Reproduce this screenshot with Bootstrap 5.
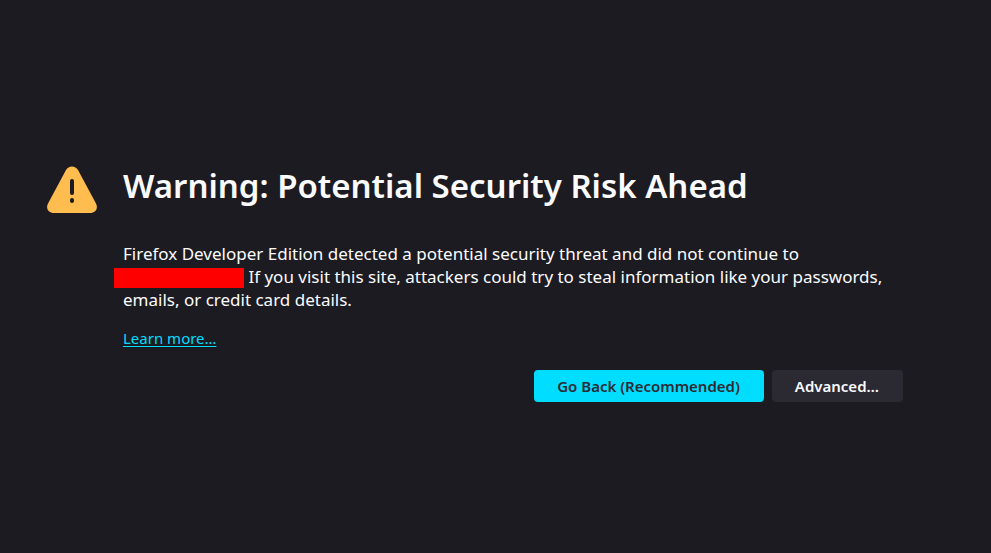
<!DOCTYPE html>
<html lang="en">
<head>
<meta charset="utf-8">
<meta name="viewport" content="width=device-width, initial-scale=1">
<title>Warning: Potential Security Risk Ahead</title>
<link href="https://cdn.jsdelivr.net/npm/bootstrap@5.3.0/dist/css/bootstrap.min.css" rel="stylesheet">
<style>
body { background: #1c1b22; color: #fbfbfe; font-family: "Noto Sans", sans-serif; font-size: 15px; padding: 7px 88px 0 47px; }
.warn-icon { width: 50px; height: 48px; margin-top: 8px; margin-right: 26px; }
h1 { font-size: 33px; line-height: 40px; font-weight: 600; margin-bottom: 36px; padding-top: 8px; }
.intro { font-size: 17px; line-height: 23px; margin-bottom: 16px; }
.redacted { display: inline-block; width: 130px; height: 20px; margin-left: -9px; background: #f00; vertical-align: middle; }
.more { color: #00ddff; line-height: 22px; text-underline-offset: 2px; }
.actions { margin-top: 20px; }
.page-btn { font-size: 15px; font-weight: 600; line-height: 20px; padding: 6px 24px 6px 23px; border: 0; border-radius: 4px; }
.btn-go, .btn-go:hover { background: #00ddff; color: #2b2a33; }
.btn-adv, .btn-adv:hover { background: #2b2a33; color: #fbfbfe; }
</style>
</head>
<body class="min-vh-100 d-flex flex-column justify-content-center">
<main class="d-flex align-items-start">
  <svg class="warn-icon flex-shrink-0" viewBox="0 0 50 48" aria-hidden="true">
    <path fill="#ffbd4f" d="M19 4C21.500 -.7 28.500 -.7 31 4L49 37.500C51.500 42.500 48.500 47 43 47H7C1.500 47 -1.500 42.500 1 37.500Z"/>
    <rect x="23" y="13" width="4" height="16" rx="2" fill="#1c1b22"/>
    <rect x="23" y="32" width="4" height="5" rx="2" fill="#1c1b22"/>
  </svg>
  <div class="flex-grow-1">
    <h1>Warning: Potential Security Risk Ahead</h1>
    <p class="intro">Firefox Developer Edition detected a potential security threat and did not continue to <span class="redacted"></span> If you visit this site, attackers could try to steal information like your passwords, emails, or credit card details.</p>
    <a class="more" href="#">Learn more…</a>
    <div class="actions d-flex flex-wrap justify-content-end gap-2">
      <button type="button" class="btn page-btn btn-go">Go Back (Recommended)</button>
      <button type="button" class="btn page-btn btn-adv">Advanced…</button>
    </div>
  </div>
</main>
<script src="https://cdn.jsdelivr.net/npm/bootstrap@5.3.0/dist/js/bootstrap.bundle.min.js"></script>
</body>
</html>
